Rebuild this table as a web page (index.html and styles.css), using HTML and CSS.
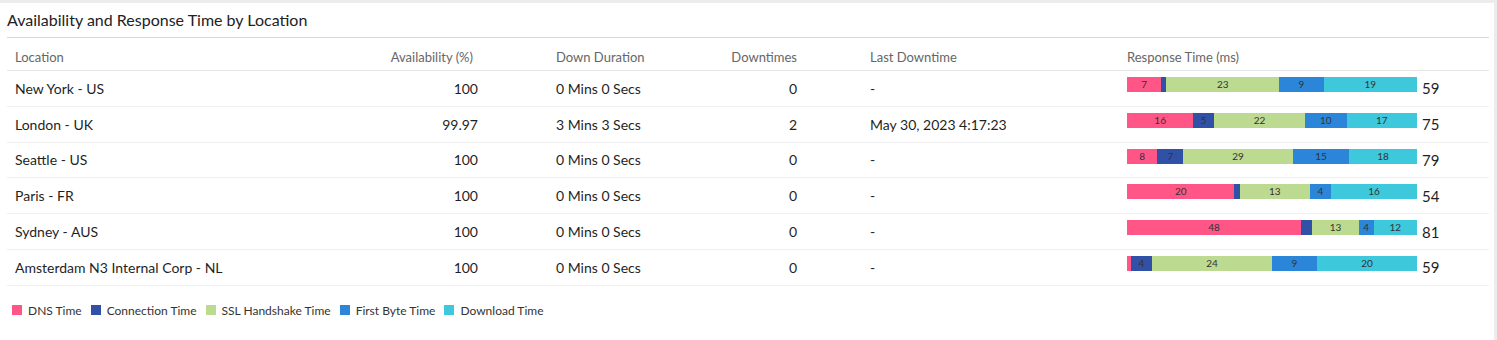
FILE: index.html
```html
<!DOCTYPE html>
<html>
<head>
<meta charset="utf-8">
<link rel="stylesheet" href="styles.css">
</head>
<body>
<div class="card">
  <div class="title">Availability and Response Time by Location</div>
  <div class="table">
    <div class="row head">
      <div class="c loc">Location</div>
      <div class="c avail">Availability (%)</div>
      <div class="c dur">Down Duration</div>
      <div class="c cnt">Downtimes</div>
      <div class="c last">Last Downtime</div>
      <div class="c resp">Response Time (ms)</div>
    </div>

    <div class="row">
      <div class="c loc">New York - US</div>
      <div class="c avail">100</div>
      <div class="c dur">0 Mins 0 Secs</div>
      <div class="c cnt">0</div>
      <div class="c last">-</div>
      <div class="c resp">
        <div class="bar">
          <span class="seg dns" style="flex-grow:7">7</span>
          <span class="seg con" style="flex-grow:1"></span>
          <span class="seg ssl" style="flex-grow:23">23</span>
          <span class="seg fb" style="flex-grow:9">9</span>
          <span class="seg dl" style="flex-grow:19">19</span>
        </div>
        <span class="total">59</span>
      </div>
    </div>

    <div class="row">
      <div class="c loc">London - UK</div>
      <div class="c avail">99.97</div>
      <div class="c dur">3 Mins 3 Secs</div>
      <div class="c cnt">2</div>
      <div class="c last">May 30, 2023 4:17:23</div>
      <div class="c resp">
        <div class="bar">
          <span class="seg dns" style="flex-grow:16">16</span>
          <span class="seg con" style="flex-grow:5">5</span>
          <span class="seg ssl" style="flex-grow:22">22</span>
          <span class="seg fb" style="flex-grow:10">10</span>
          <span class="seg dl" style="flex-grow:17">17</span>
        </div>
        <span class="total">75</span>
      </div>
    </div>

    <div class="row">
      <div class="c loc">Seattle - US</div>
      <div class="c avail">100</div>
      <div class="c dur">0 Mins 0 Secs</div>
      <div class="c cnt">0</div>
      <div class="c last">-</div>
      <div class="c resp">
        <div class="bar">
          <span class="seg dns" style="flex-grow:8">8</span>
          <span class="seg con" style="flex-grow:7">7</span>
          <span class="seg ssl" style="flex-grow:29">29</span>
          <span class="seg fb" style="flex-grow:15">15</span>
          <span class="seg dl" style="flex-grow:18">18</span>
        </div>
        <span class="total">79</span>
      </div>
    </div>

    <div class="row">
      <div class="c loc">Paris - FR</div>
      <div class="c avail">100</div>
      <div class="c dur">0 Mins 0 Secs</div>
      <div class="c cnt">0</div>
      <div class="c last">-</div>
      <div class="c resp">
        <div class="bar">
          <span class="seg dns" style="flex-grow:20">20</span>
          <span class="seg con" style="flex-grow:1"></span>
          <span class="seg ssl" style="flex-grow:13">13</span>
          <span class="seg fb" style="flex-grow:4">4</span>
          <span class="seg dl" style="flex-grow:16">16</span>
        </div>
        <span class="total">54</span>
      </div>
    </div>

    <div class="row">
      <div class="c loc">Sydney - AUS</div>
      <div class="c avail">100</div>
      <div class="c dur">0 Mins 0 Secs</div>
      <div class="c cnt">0</div>
      <div class="c last">-</div>
      <div class="c resp">
        <div class="bar">
          <span class="seg dns" style="flex-grow:48">48</span>
          <span class="seg con" style="flex-grow:3"></span>
          <span class="seg ssl" style="flex-grow:13">13</span>
          <span class="seg fb" style="flex-grow:4">4</span>
          <span class="seg dl" style="flex-grow:12">12</span>
        </div>
        <span class="total">81</span>
      </div>
    </div>

    <div class="row">
      <div class="c loc">Amsterdam N3 Internal Corp - NL</div>
      <div class="c avail">100</div>
      <div class="c dur">0 Mins 0 Secs</div>
      <div class="c cnt">0</div>
      <div class="c last">-</div>
      <div class="c resp">
        <div class="bar">
          <span class="seg dns" style="flex-grow:0.8"></span>
          <span class="seg con" style="flex-grow:4.2">4</span>
          <span class="seg ssl" style="flex-grow:24">24</span>
          <span class="seg fb" style="flex-grow:9">9</span>
          <span class="seg dl" style="flex-grow:20">20</span>
        </div>
        <span class="total">59</span>
      </div>
    </div>
  </div>

  <div class="legend">
    <span class="item"><i class="sw dns"></i>DNS Time</span>
    <span class="item"><i class="sw con"></i>Connection Time</span>
    <span class="item"><i class="sw ssl"></i>SSL Handshake Time</span>
    <span class="item"><i class="sw fb"></i>First Byte Time</span>
    <span class="item"><i class="sw dl"></i>Download Time</span>
  </div>
</div>
</body>
</html>
```

FILE: styles.css
```css
html, body {
  margin: 0;
  padding: 0;
}
body {
  background: #ececec;
  font-family: Lato, "Open Sans", sans-serif;
  color: #1f1f1f;
  width: 1497px;
  height: 340px;
  overflow: hidden;
}
.card {
  margin-top: 3px;
  width: 1494px;
  height: 337px;
  background: #fff;
  box-sizing: border-box;
  padding: 0 5px 0 7px;
}
.title {
  height: 34px;
  line-height: 34px;
  font-size: 16px;
  color: #222;
  border-bottom: 1px solid #d9d9d9;
}
.row {
  display: grid;
  grid-template-columns: 323px 218px 150px 164px 257px 1fr;
  height: 34.8px;
  border-bottom: 1px solid #efefef;
  align-items: center;
  font-size: 14px;
}
.row.head {
  border-bottom-color: #e6e6e6;
  font-size: 13px;
  color: #666;
  padding-top: 5px;
  box-sizing: border-box;
  height: 33px;
}
.c {
  white-space: nowrap;
}
.loc { padding-left: 8px; }
.avail { text-align: right; padding-right: 70px; }
.head .avail { padding-right: 75px; }
.dur { padding-left: 8px; }
.cnt { text-align: right; padding-right: 65px; }
.last { padding-left: 8px; }
.resp {
  padding-left: 8px;
  display: flex;
  align-items: center;
}
.row:not(.head) .resp {
  align-self: stretch;
}
.bar {
  width: 290px;
  height: 15px;
  display: flex;
  align-self: flex-start;
  margin-top: 6px;
}
.seg {
  flex-basis: 0;
  flex-shrink: 1;
  min-width: 0;
  overflow: hidden;
  font-size: 10px;
  line-height: 15px;
  text-align: center;
  color: #333;
}
.total {
  margin-left: 5px;
  font-size: 15px;
  color: #1f1f1f;
}
.dns { background: #ff5687; }
.con { background: #3151a6; }
.ssl { background: #bcda90; }
.fb { background: #2b86da; }
.dl { background: #3dc8dc; }
.legend {
  display: flex;
  align-items: center;
  gap: 9px;
  height: 49px;
  padding-left: 5px;
  font-size: 12px;
  color: #333;
}
.item {
  display: flex;
  align-items: center;
}
.sw {
  display: inline-block;
  width: 10px;
  height: 10px;
  margin-right: 6px;
}
```
